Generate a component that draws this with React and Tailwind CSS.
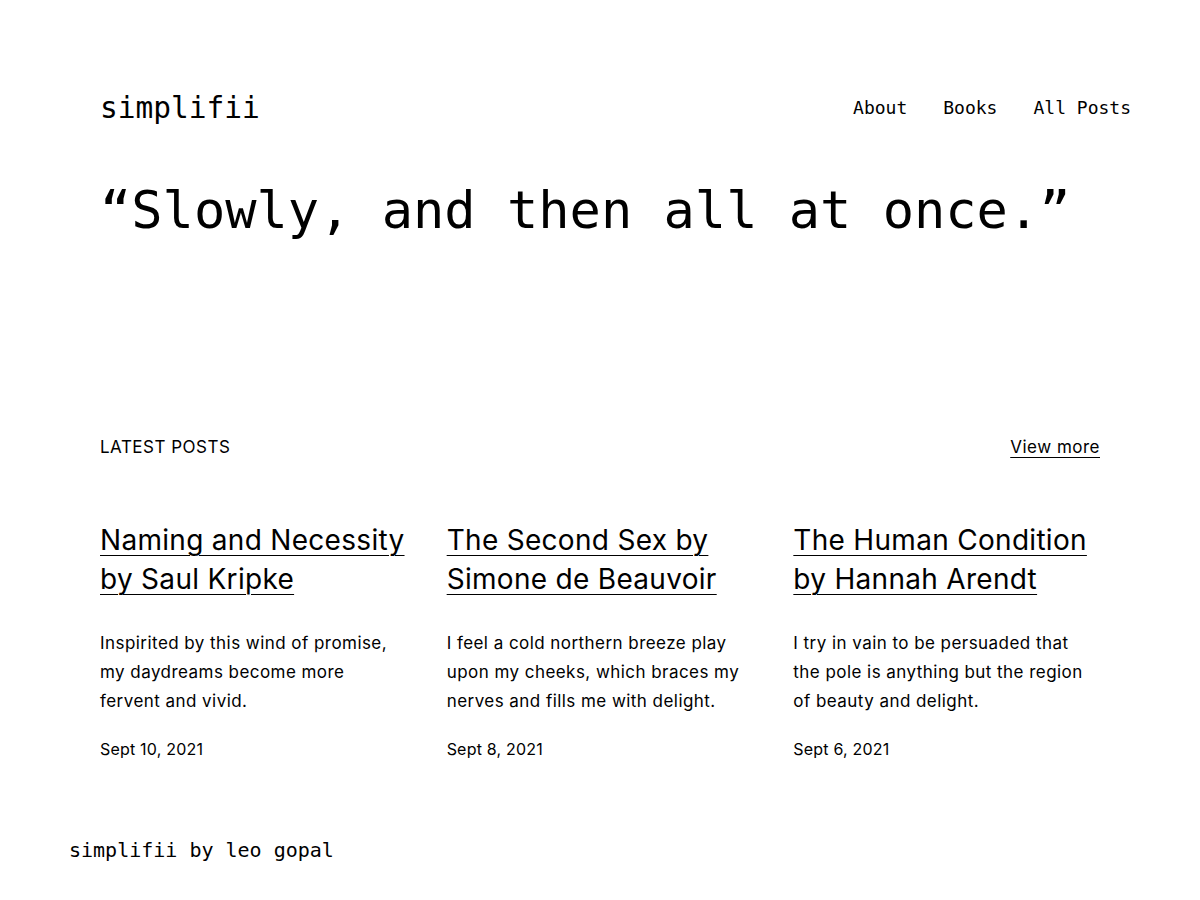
const mono = { fontFamily: '"DejaVu Sans Mono", "Liberation Mono", monospace' };

const posts = [
  {
    title: "Naming and Necessity by Saul Kripke",
    excerpt: "Inspirited by this wind of promise, my daydreams become more fervent and vivid.",
    date: "Sept 10, 2021",
  },
  {
    title: "The Second Sex by Simone de Beauvoir",
    excerpt: "I feel a cold northern breeze play upon my cheeks, which braces my nerves and fills me with delight.",
    date: "Sept 8, 2021",
  },
  {
    title: "The Human Condition by Hannah Arendt",
    excerpt: "I try in vain to be persuaded that the pole is anything but the region of beauty and delight.",
    date: "Sept 6, 2021",
  },
];

function PostCard({ post }) {
  return (
    <article className="flex flex-col">
      <a
        href="#"
        className="mt-px text-[28px] leading-[39px] text-black underline decoration-1 underline-offset-[5px] tracking-[0.3px]"
      >
        {post.title}
      </a>
      <p className="mt-[30px] text-[17px] leading-[29px] tracking-[0.45px] text-black">{post.excerpt}</p>
      <p className="mt-[21px] text-[16px] leading-[24px] tracking-[0.2px] text-black">{post.date}</p>
    </article>
  );
}

export default function App() {
  return (
    <div
      className="min-h-[900px] w-full bg-white text-black"
      style={{ fontFamily: 'Inter, "Noto Sans", sans-serif' }}
    >
      <div className="px-[69px] pt-[90px]">
        <header className="flex items-center justify-between pl-[31px]" style={mono}>
          <a href="#" className="text-[29.5px] leading-[36px]">simplifii</a>
          <nav className="flex gap-9 text-[18px] leading-[36px]">
            <a href="#">About</a>
            <a href="#">Books</a>
            <a href="#">All Posts</a>
          </nav>
        </header>

        <h1 className="mt-[53px] pl-[31px] text-[52px] leading-[62px]" style={mono}>
          “Slowly, and then all at once.”
        </h1>

        <section className="mt-[194px] px-[31px]">
          <div className="flex items-center justify-between text-[17px] leading-[24px] tracking-[0.5px]">
            <h2>LATEST POSTS</h2>
            <a href="#" className="underline decoration-1 underline-offset-[4px]">View more</a>
          </div>
          <div className="mt-[61px] grid grid-cols-3 gap-10">
            {posts.map((p) => (
              <PostCard key={p.date} post={p} />
            ))}
          </div>
        </section>

        <footer className="mt-[75px] text-[20px] leading-[28px]" style={mono}>
          simplifii by leo gopal
        </footer>
      </div>
    </div>
  );
}
